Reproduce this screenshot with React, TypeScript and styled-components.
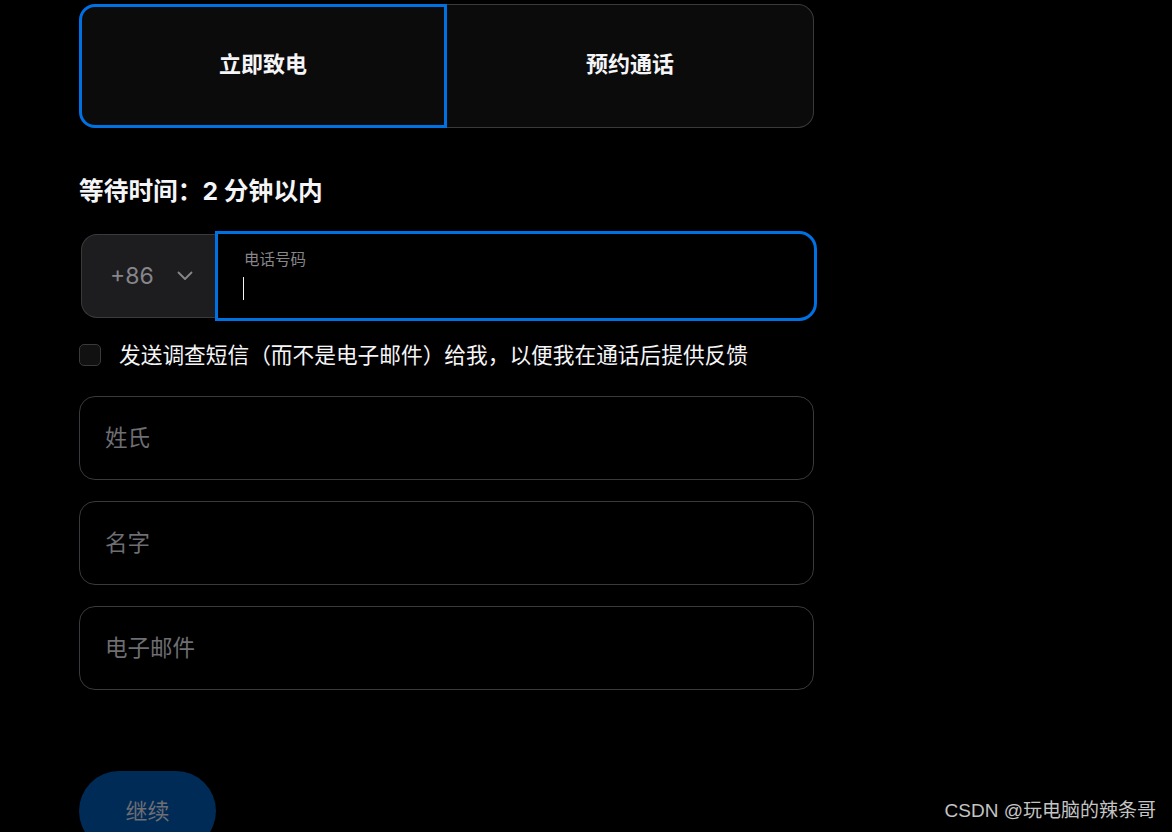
import styled, { createGlobalStyle } from 'styled-components'

const GlobalStyle = createGlobalStyle`
  html, body {
    margin: 0;
    background: #000;
  }
  body {
    font-family: "Inter", "Noto Sans CJK SC", sans-serif;
    color: #f5f5f7;
  }
`

const Page = styled.div({
  position: 'relative',
  height: 832,
  overflow: 'hidden',
  paddingLeft: 79,
  paddingTop: 4,
  boxSizing: 'border-box',
})

const Form = styled.div({
  width: 735,
  display: 'flex',
  flexDirection: 'column',
})

const Segments = styled.div({
  display: 'grid',
  gridTemplateColumns: '368px 367px',
  height: 124,
  flexShrink: 0,
})

const Segment = styled.div<{ $active?: boolean; $side: 'left' | 'right' }>(({ $active, $side }) => ({
  display: 'flex',
  alignItems: 'center',
  justifyContent: 'center',
  paddingBottom: 8,
  background: '#0b0b0b',
  fontSize: 22,
  fontWeight: 700,
  color: '#f5f5f7',
  boxSizing: 'border-box',
  border: $active ? '3px solid #0071e3' : '1px solid #3a3a3c',
  borderLeft: $side === 'right' && !$active ? 'none' : undefined,
  borderRadius: $side === 'left' ? '16px 0 0 16px' : '0 16px 16px 0',
}))

const Wait = styled.h2({
  margin: '48px 0 0',
  fontSize: 24.7,
  lineHeight: '30px',
  fontWeight: 700,
  color: '#f5f5f7',
})

const PhoneRow = styled.div({
  display: 'flex',
  alignItems: 'center',
  marginTop: 25,
  width: 738,
  flexShrink: 0,
})

const CountrySelect = styled.div({
  marginLeft: 2,
  width: 134,
  height: 84,
  boxSizing: 'border-box',
  background: '#1d1d1f',
  border: '1px solid #3a3a3c',
  borderRight: 'none',
  borderRadius: '16px 0 0 16px',
  display: 'flex',
  alignItems: 'center',
  paddingLeft: 28,
  gap: 23,
  fontSize: 23,
  color: '#86868b',
})

const PhoneField = styled.div({
  flex: 1,
  height: 90,
  boxSizing: 'border-box',
  border: '3px solid #0071e3',
  borderRadius: '0 18px 18px 0',
  background: '#000',
  padding: '16px 0 0 26px',
  display: 'flex',
  flexDirection: 'column',
})

const FloatLabel = styled.span({
  fontSize: 15.5,
  lineHeight: '20px',
  color: '#86868b',
})

const Caret = styled.span({
  marginTop: 7,
  marginLeft: -1,
  width: 1,
  height: 23,
  background: '#f5f5f7',
})

const CheckRow = styled.label({
  display: 'flex',
  alignItems: 'center',
  gap: 18,
  marginTop: 22,
  fontSize: 21.7,
  lineHeight: '24px',
  color: '#f5f5f7',
})

const Box = styled.span({
  width: 22,
  height: 22,
  boxSizing: 'border-box',
  border: '1px solid #3a3a3c',
  background: '#111',
  borderRadius: 5,
  flexShrink: 0,
})

const Fields = styled.div({
  display: 'flex',
  flexDirection: 'column',
  gap: 21,
  marginTop: 29,
})

const TextField = styled.div({
  height: 84,
  boxSizing: 'border-box',
  border: '1px solid #3a3a3c',
  borderRadius: 16,
  display: 'flex',
  alignItems: 'center',
  paddingLeft: 25,
  paddingBottom: 4,
  fontSize: 22.5,
  color: '#6e6e73',
})

const Continue = styled.button({
  marginTop: 81,
  width: 137,
  height: 80,
  flexShrink: 0,
  border: 'none',
  borderRadius: 40,
  background: '#002b57',
  color: '#6e6e73',
  fontFamily: 'inherit',
  fontSize: 22,
  padding: '0 0 4px',
})

const Watermark = styled.div({
  position: 'absolute',
  right: 16,
  bottom: 11,
  fontFamily: '"Liberation Sans", "Noto Sans CJK SC", sans-serif',
  fontSize: 19,
  lineHeight: '21px',
  color: '#c4c4c4',
})

const Chevron = () => (
  <svg width="16" height="10" viewBox="0 0 16 10" fill="none">
    <path d="M1.5 1.5 L8 8 L14.5 1.5" stroke="#86868b" strokeWidth="1.8" strokeLinecap="round" strokeLinejoin="round" />
  </svg>
)

export default function App() {
  return (
    <Page>
      <GlobalStyle />
      <Form>
        <Segments>
          <Segment $active $side="left">立即致电</Segment>
          <Segment $side="right">预约通话</Segment>
        </Segments>
        <Wait>等待时间：2 分钟以内</Wait>
        <PhoneRow>
          <CountrySelect>
            <span>+86</span>
            <Chevron />
          </CountrySelect>
          <PhoneField>
            <FloatLabel>电话号码</FloatLabel>
            <Caret />
          </PhoneField>
        </PhoneRow>
        <CheckRow>
          <Box />
          <span>发送调查短信（而不是电子邮件）给我，以便我在通话后提供反馈</span>
        </CheckRow>
        <Fields>
          <TextField>姓氏</TextField>
          <TextField>名字</TextField>
          <TextField>电子邮件</TextField>
        </Fields>
        <Continue>继续</Continue>
      </Form>
      <Watermark>CSDN @玩电脑的辣条哥</Watermark>
    </Page>
  )
}
